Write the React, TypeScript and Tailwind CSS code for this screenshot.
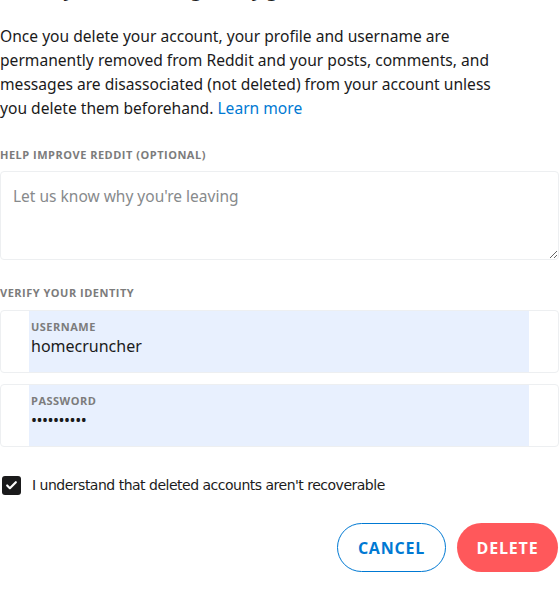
import { Check } from 'lucide-react';

const sans = "font-['Noto_Sans',sans-serif]";
const label = "font-['Open_Sans',sans-serif] text-[11px] font-bold tracking-[0.5px] text-[#7c7c7c] uppercase leading-[12px]";

export default function App() {
  return (
    <div className={`w-[560px] h-[590px] bg-white overflow-hidden text-[#1c1c1c] ${sans}`}>
      {/* heading mostly scrolled out of view */}
      <h2 className="-mt-[22px] h-[24px] text-[18px] leading-[24px] font-bold text-[#1c1c1c]">
        Delete your account, gone by good
      </h2>

      <p className="mt-[22px] text-[15.6px] leading-[24px] text-[#1a1a1b] pr-[50px]">
        Once you delete your account, your profile and username are permanently removed from Reddit and
        your posts, comments, and messages are disassociated (not deleted) from your account unless you
        delete them beforehand. <span className="text-[#0079d3]">Learn more</span>
      </p>

      <div className={`mt-[29px] ${label}`}>Help improve Reddit (optional)</div>
      <textarea
        className="mt-[10px] block w-[559px] h-[89px] border border-[#edeff1] rounded-[4px] px-[12px] py-[12px] text-[15.5px] leading-[24px] placeholder:text-[#878a8c] outline-none resize-y"
        placeholder="Let us know why you're leaving"
      />

      <div className={`mt-[27px] ${label}`}>Verify your identity</div>
      <div className="mt-[11px] flex flex-col gap-[11px]">
        <Field name="Username" value="homecruncher" />
        <Field name="Password" value="••••••••••" dots />
      </div>

      <label className="mt-[28px] flex items-center gap-[11px] pl-[2px]">
        <span className="w-[19px] h-[19px] rounded-[3px] bg-[#1a1a1b] flex items-center justify-center">
          <Check className="w-[13px] h-[13px] text-white" strokeWidth={4} />
        </span>
        <span className="text-[14px] leading-[20px] text-[#1c1c1c] font-['DejaVu_Sans',sans-serif] tracking-[-0.5px]">
          I understand that deleted accounts aren't recoverable
        </span>
      </label>

      <div className="mt-[28px] flex justify-end gap-[11px] pr-[2px]">
        <button className="w-[109px] h-[49px] rounded-full border border-[#0079d3] text-[#0079d3] font-['Open_Sans',sans-serif] font-bold text-[16px] tracking-[0.8px]">
          CANCEL
        </button>
        <button className="w-[101px] h-[49px] rounded-full bg-[#ff585b] text-white font-['Open_Sans',sans-serif] font-bold text-[16px] tracking-[0.8px]">
          DELETE
        </button>
      </div>
    </div>
  );
}

function Field({ name, value, dots }: { name: string; value: string; dots?: boolean }) {
  return (
    <div className="w-[559px] h-[63px] border border-[#edeff1] rounded-[4px] bg-white">
      <div className="ml-[28px] w-[500px] h-full bg-[#e8f0fe] pl-[2px] pt-[10px]">
        <div className={label}>{name}</div>
        <div
          className={
            dots
              ? 'mt-[4px] text-[16px] leading-[18px] text-[#1a1a1b] tracking-[-0.5px]'
              : 'mt-[2px] text-[16px] leading-[22px] text-[#1a1a1b]'
          }
        >
          {value}
        </div>
      </div>
    </div>
  );
}
